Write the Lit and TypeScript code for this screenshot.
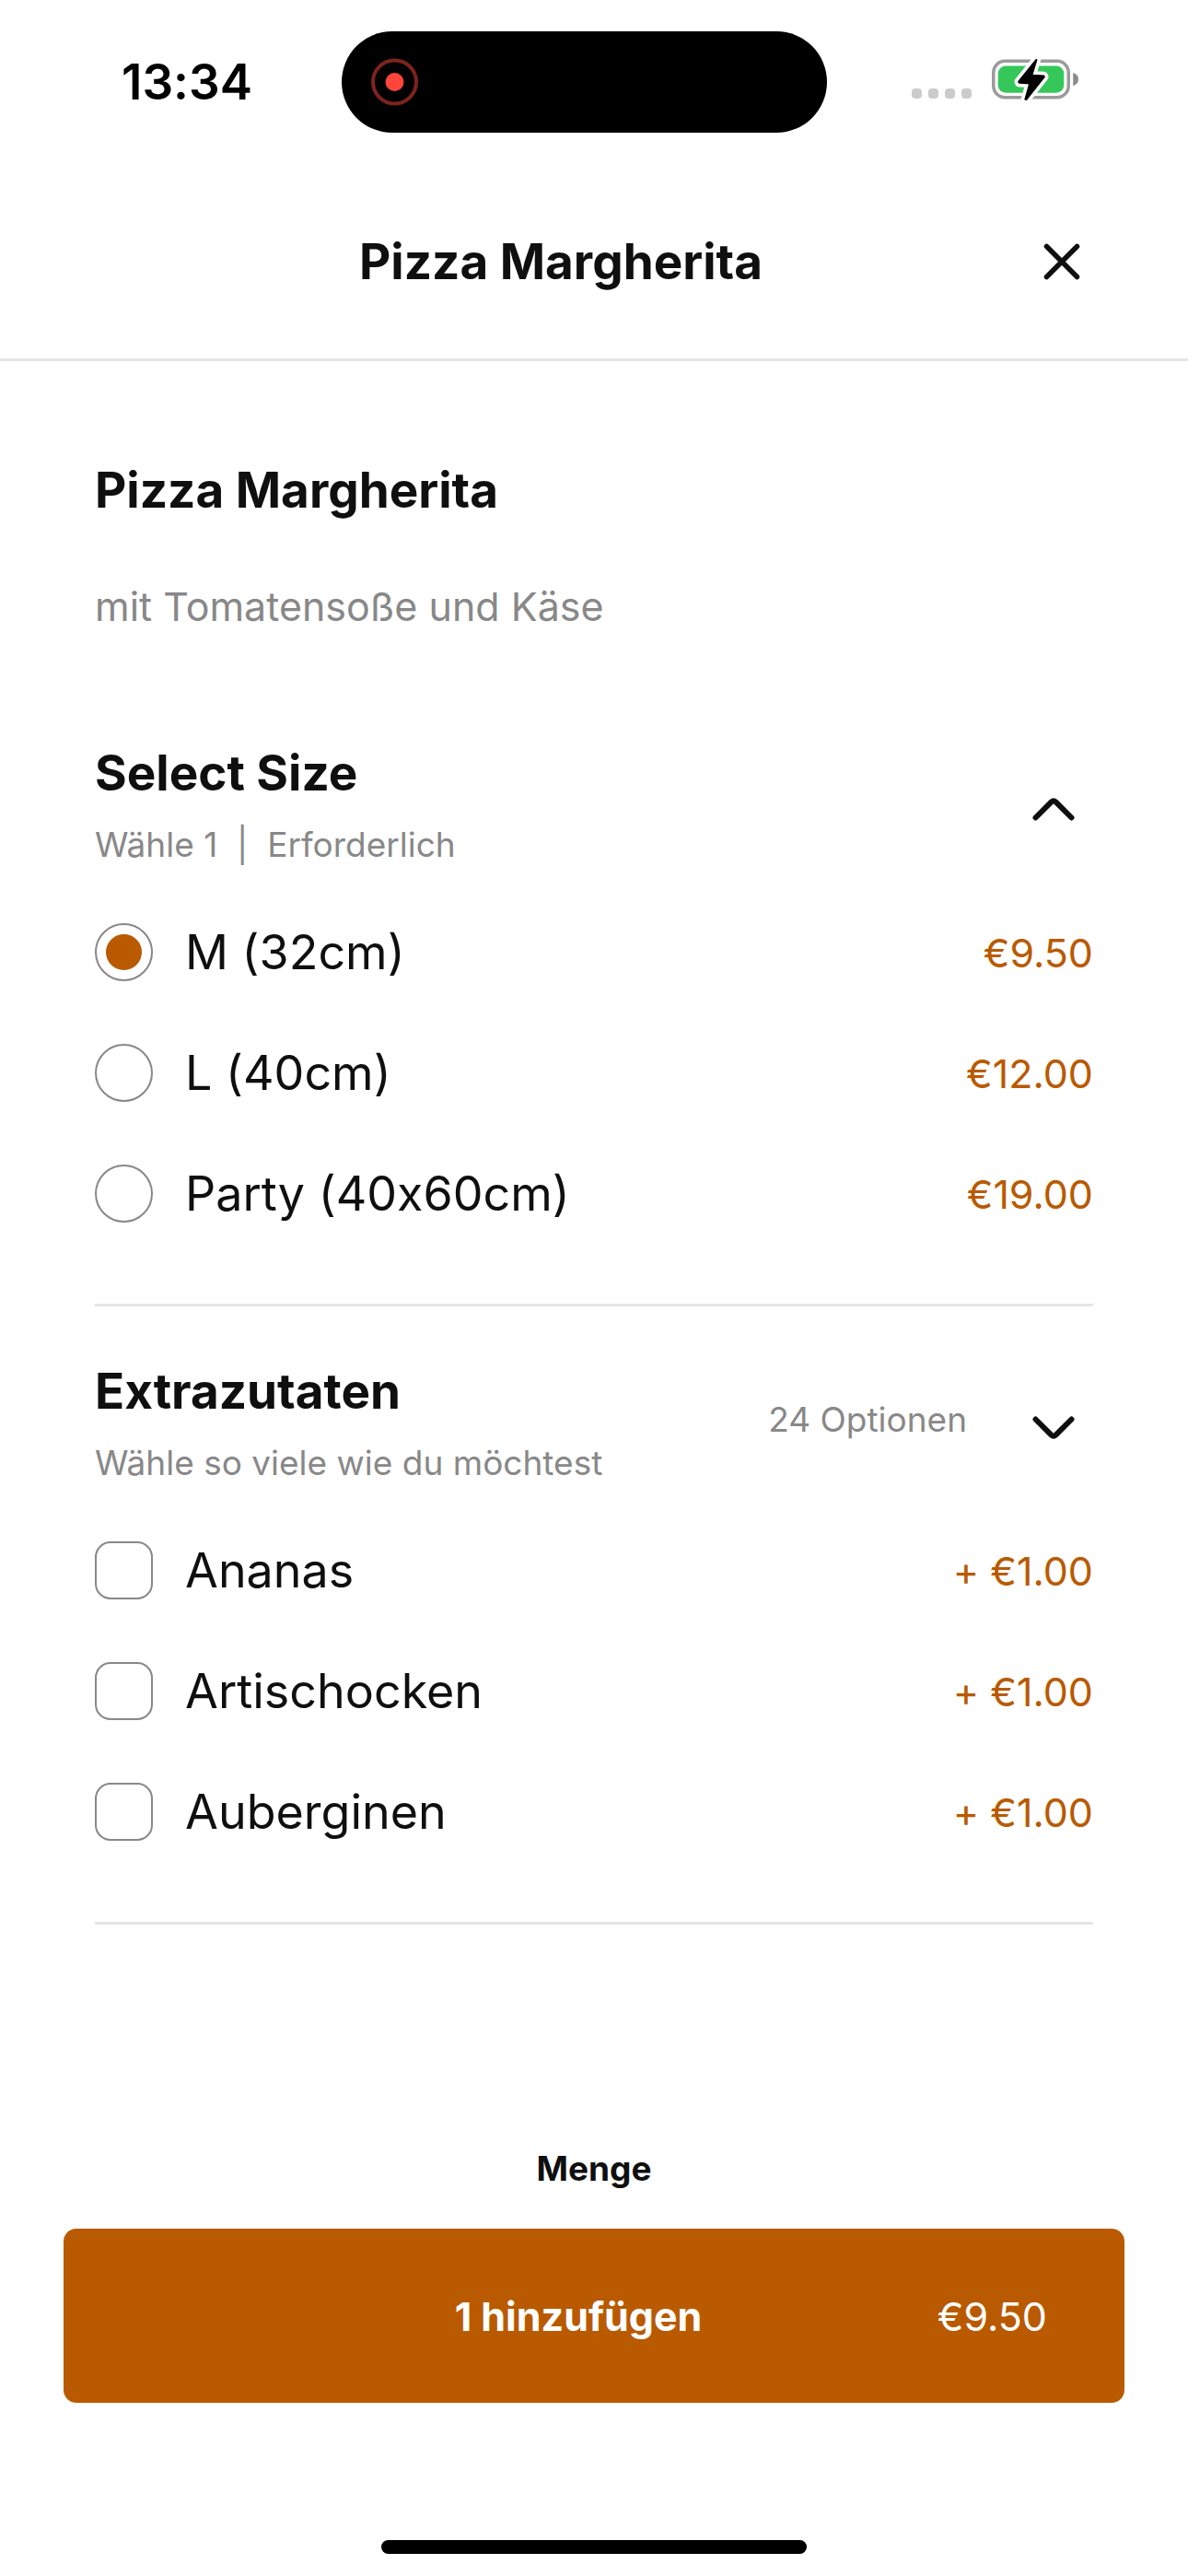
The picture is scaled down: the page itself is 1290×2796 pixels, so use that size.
import { LitElement, html, css, svg } from "lit";
import { customElement, state } from "lit/decorators.js";

interface Option {
  id: string;
  name: string;
  price: number;
}

const SIZES: Option[] = [
  { id: "m", name: "M (32cm)", price: 9.5 },
  { id: "l", name: "L (40cm)", price: 12 },
  { id: "party", name: "Party (40x60cm)", price: 19 },
];

const EXTRAS: Option[] = [
  { id: "ananas", name: "Ananas", price: 1 },
  { id: "artischocken", name: "Artischocken", price: 1 },
  { id: "auberginen", name: "Auberginen", price: 1 },
];

const euro = (value: number) => `€${value.toFixed(2)}`;

const BOLT = "M48.2 .8 L48.6 1 L43.6 17.6 L56.4 18.2 L57 19.4 L37.4 44.2 L36.2 43.8 L41 26.6 L29.6 26 L29 24.6 Z";

@customElement("status-bar")
export class StatusBar extends LitElement {
  static styles = css`
    :host {
      display: flex;
      align-items: center;
      justify-content: space-between;
      height: 178px;
      padding: 0 119px 0 127px;
      box-sizing: border-box;
      color: #000;
    }
    .time {
      width: 152px;
      text-align: center;
      font-size: 53px;
      line-height: 64px;
      font-weight: 600;
    }
    .island {
      display: flex;
      align-items: center;
      width: 527px;
      height: 110px;
      padding-left: 32px;
      box-sizing: border-box;
      border-radius: 55px;
      background: #000;
    }
    .indicators {
      display: flex;
    }
    svg {
      display: block;
    }
  `;

  render() {
    return html`
      <div class="time">13:34</div>
      <div class="island">
        <svg width="52" height="52" viewBox="0 0 52 52" aria-hidden="true">
          <circle cx="25.5" cy="26" r="23.5" fill="none" stroke="#7e231d" stroke-width="4" />
          <circle cx="25.5" cy="26" r="10" fill="#ff453a" />
        </svg>
      </div>
      <div class="indicators">
        <svg width="181" height="50" viewBox="0 0 181 50" aria-hidden="true">
          ${[0, 18, 36, 54].map(
            (x) => svg`<rect x=${x} y="32" width="11" height="11" rx="4" fill="#cbcbcb" />`
          )}
          <g transform="translate(87 0)">
            <rect x="1.75" y="2.25" width="81.5" height="39.5" rx="12.5" fill="none" stroke="#9b9b9b" stroke-width="3.5" />
            <rect x="6.7" y="7.4" width="71.6" height="29.4" rx="8.5" fill="#35c759" />
            <path d="M88.2 15 C92.3 16.2 94 19 94 22 C94 25 92.3 27.8 88.2 29.2 Z" fill="#8c8c8c" />
            <path d=${BOLT} fill="#fff" stroke="#fff" stroke-width="9" stroke-linejoin="round" />
            <path d=${BOLT} fill="#000" stroke="#000" stroke-width="1.6" stroke-linejoin="round" />
          </g>
        </svg>
      </div>
    `;
  }
}

@customElement("app-root")
export class AppRoot extends LitElement {
  @state() private size = "m";
  @state() private extras: string[] = [];
  @state() private sizesOpen = true;
  @state() private extrasOpen = false;

  static styles = css`
    :host {
      display: flex;
      flex-direction: column;
      min-height: 100vh;
      background: #fff;
      color: #0f0f0f;
      font-family: Inter, "Liberation Sans", sans-serif;
      font-variant-ligatures: no-contextual;
    }
    h1,
    h2,
    h3,
    p {
      margin: 0;
    }
    h1,
    h2,
    h3 {
      font-size: 53px;
      line-height: 64px;
      font-weight: 700;
    }
    button {
      border: 0;
      padding: 0;
      background: none;
      color: inherit;
      font: inherit;
      font-variant-ligatures: inherit;
      cursor: pointer;
    }
    svg {
      display: block;
    }
    .header {
      display: flex;
      align-items: center;
      height: 211px;
      padding: 0 100px 0 103px;
      border-bottom: 3px solid #e5e5e5;
    }
    .header h1 {
      flex: 1;
      text-align: center;
    }
    .close {
      display: grid;
      place-items: center;
      width: 75px;
      height: 75px;
    }
    .main {
      flex: 1;
      padding: 108px 103px 0;
    }
    .description {
      margin-top: 68px;
      margin-bottom: 63px;
      font-size: 43px;
      line-height: 52px;
      color: #888;
    }
    .group {
      padding: 60px 0 54px;
      border-bottom: 3px solid #e5e5e5;
    }
    .group-head {
      display: flex;
      align-items: center;
      margin-bottom: 29px;
    }
    .group-title {
      flex: 1;
      display: grid;
      gap: 24px;
    }
    .note {
      font-size: 37px;
      line-height: 44px;
      color: #888;
      white-space: pre;
    }
    .count {
      padding-bottom: 6px;
    }
    .toggle {
      display: grid;
      place-items: center;
      width: 86px;
      height: 86px;
      margin-left: 51px;
      padding-top: 10px;
    }
    .row {
      display: flex;
      align-items: center;
      gap: 35px;
      height: 131px;
      font-size: 52px;
      line-height: 64px;
      cursor: pointer;
    }
    .row .name {
      flex: 1;
    }
    .row .price {
      font-size: 43px;
      line-height: 52px;
      color: #b95a00;
    }
    .tick {
      appearance: none;
      display: grid;
      place-items: center;
      width: 63px;
      height: 63px;
      margin: 0;
      border: 2px solid #888;
      border-radius: 17px;
      background: #fff;
      cursor: pointer;
    }
    .tick[type="radio"] {
      border-radius: 50%;
    }
    .tick:checked::after {
      content: "";
      width: 39px;
      height: 39px;
      border-radius: 10px;
      background: #b95a00;
    }
    .tick[type="radio"]:checked::after {
      border-radius: 50%;
    }
    .footer {
      display: grid;
      gap: 43px;
      padding: 0 69px 24px;
      text-align: center;
    }
    .quantity {
      font-size: 37px;
      line-height: 44px;
      font-weight: 700;
    }
    .add {
      display: grid;
      grid-template-columns: 1fr auto 1fr;
      align-items: center;
      height: 189px;
      padding: 0 84px 0 50px;
      border-radius: 14px;
      background: #b95a00;
      color: #fff;
      font-size: 43px;
      line-height: 52px;
    }
    .add .label {
      grid-column: 2;
      font-weight: 700;
    }
    .add .total {
      text-align: right;
    }
    .home {
      justify-self: center;
      width: 462px;
      height: 15px;
      margin-top: 106px;
      border-radius: 8px;
      background: #000;
    }
  `;

  private get total() {
    const base = SIZES.find((s) => s.id === this.size)!.price;
    return EXTRAS.filter((e) => this.extras.includes(e.id)).reduce((sum, e) => sum + e.price, base);
  }

  private toggleExtra(id: string) {
    this.extras = this.extras.includes(id) ? this.extras.filter((e) => e !== id) : [...this.extras, id];
  }

  private chevron(open: boolean) {
    return html`<svg width="48" height="27" viewBox="0 0 48 27" fill="none" stroke="#0f0f0f" stroke-width="6" stroke-linecap="round" stroke-linejoin="round" aria-hidden="true">
      <path d=${open ? "M4.5 22.5 L21.6 5.4 Q24 3.2 26.4 5.4 L43.5 22.5" : "M4.5 4.5 L21.6 21.6 Q24 23.8 26.4 21.6 L43.5 4.5"} />
    </svg>`;
  }

  render() {
    return html`
      <status-bar></status-bar>
      <header class="header">
        <h1>Pizza Margherita</h1>
        <button class="close" aria-label="Schließen">
          <svg width="42" height="42" viewBox="0 0 42 42" stroke="#0f0f0f" stroke-width="5.5" stroke-linecap="round" aria-hidden="true">
            <path d="M4.5 4.5 L37.5 37.5 M37.5 4.5 L4.5 37.5" />
          </svg>
        </button>
      </header>

      <main class="main">
        <h2>Pizza Margherita</h2>
        <p class="description">mit Tomatensoße und Käse</p>

        <section class="group">
          <div class="group-head">
            <div class="group-title">
              <h3>Select Size</h3>
              <p class="note">Wähle 1  |  Erforderlich</p>
            </div>
            <button
              class="toggle"
              aria-label="Select Size"
              aria-expanded=${this.sizesOpen}
              @click=${() => (this.sizesOpen = !this.sizesOpen)}
            >
              ${this.chevron(this.sizesOpen)}
            </button>
          </div>
          ${this.sizesOpen
            ? SIZES.map(
                (s) => html`<label class="row">
                  <input class="tick" type="radio" name="size" .checked=${this.size === s.id} @change=${() => (this.size = s.id)} />
                  <span class="name">${s.name}</span>
                  <span class="price">${euro(s.price)}</span>
                </label>`
              )
            : null}
        </section>

        <section class="group">
          <div class="group-head">
            <div class="group-title">
              <h3>Extrazutaten</h3>
              <p class="note">Wähle so viele wie du möchtest</p>
            </div>
            <span class="note count">24 Optionen</span>
            <button
              class="toggle"
              aria-label="Extrazutaten"
              aria-expanded=${this.extrasOpen}
              @click=${() => (this.extrasOpen = !this.extrasOpen)}
            >
              ${this.chevron(this.extrasOpen)}
            </button>
          </div>
          ${EXTRAS.map(
            (e) => html`<label class="row">
              <input class="tick" type="checkbox" .checked=${this.extras.includes(e.id)} @change=${() => this.toggleExtra(e.id)} />
              <span class="name">${e.name}</span>
              <span class="price">+ ${euro(e.price)}</span>
            </label>`
          )}
        </section>
      </main>

      <footer class="footer">
        <div class="quantity">Menge</div>
        <button class="add">
          <span class="label">1 hinzufügen</span>
          <span class="total">${euro(this.total)}</span>
        </button>
        <div class="home"></div>
      </footer>
    `;
  }
}
